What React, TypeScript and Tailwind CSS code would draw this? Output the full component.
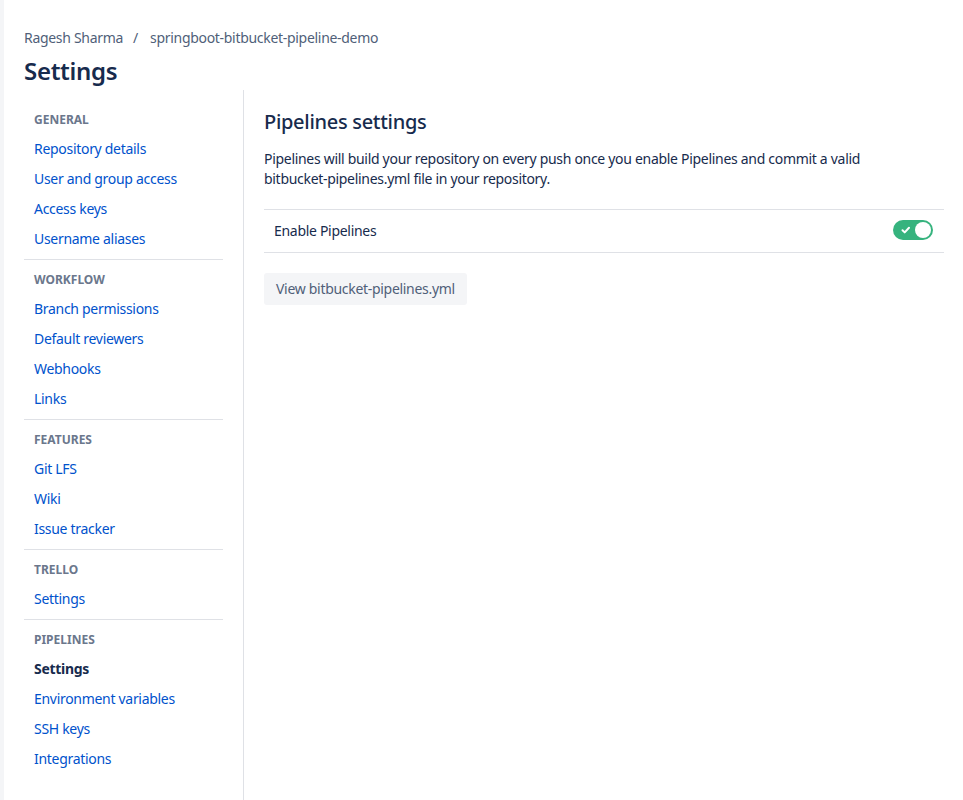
const groups: { title: string; items: string[]; active?: string }[] = [
  { title: 'General', items: ['Repository details', 'User and group access', 'Access keys', 'Username aliases'] },
  { title: 'Workflow', items: ['Branch permissions', 'Default reviewers', 'Webhooks', 'Links'] },
  { title: 'Features', items: ['Git LFS', 'Wiki', 'Issue tracker'] },
  { title: 'Trello', items: ['Settings'] },
  { title: 'Pipelines', items: ['Settings', 'Environment variables', 'SSH keys', 'Integrations'], active: 'Settings' },
];

function Toggle() {
  return (
    <div className="flex h-[20px] w-[40px] items-center justify-between rounded-full bg-[#36b37e] px-[2px]">
      <svg width="16" height="16" viewBox="0 0 16 16" className="ml-[3px]">
        <path d="M4.5 8.2l2.2 2.2 4.3-4.6" fill="none" stroke="#fff" strokeWidth="2" strokeLinecap="round" strokeLinejoin="round" />
      </svg>
      <div className="h-[16px] w-[16px] rounded-full bg-white" />
    </div>
  );
}

export default function App() {
  return (
    <div className="min-h-[800px] bg-[#f4f5f7] pl-[4px] font-['Noto_Sans',sans-serif] text-[14px] tracking-[-0.3px] text-[#172b4d]">
      <div className="min-h-[800px] bg-white pl-[20px] pr-[19px]">
        <header className="pt-[27px]">
          <nav className="flex h-[20px] items-center text-[14px] text-[#505f79]">
            <span>Ragesh Sharma</span>
            <span className="ml-[10px] mr-[12px]">/</span>
            <span>springboot-bitbucket-pipeline-demo</span>
          </nav>
          <h1 className="mt-[9px] h-[30px] text-[24px] leading-[30px] font-semibold">Settings</h1>
        </header>

        <div className="mt-[4px] flex min-h-[710px]">
          <aside className="w-[220px] shrink-0 border-r border-[#dfe1e6] pr-[20px] pt-[13px]">
            {groups.map((g, gi) => (
              <div key={g.title}>
                {gi > 0 && <div className="mb-[3px] mt-[6px] h-px bg-[#dfe1e6]" />}
                <div className="flex h-[30px] items-center px-[10px] pt-[4px] text-[12px] font-bold uppercase tracking-normal text-[#6b778c]">
                  {g.title}
                </div>
                <ul>
                  {g.items.map((item) => (
                    <li key={item} className="flex h-[30px] items-center px-[10px]">
                      {g.active === item ? (
                        <span className="font-bold text-[#172b4d]">{item}</span>
                      ) : (
                        <a href="#" className="text-[#0052cc]">{item}</a>
                      )}
                    </li>
                  ))}
                </ul>
              </div>
            ))}
          </aside>

          <main className="flex-1 pl-[20px] pt-[18px]">
            <h2 className="h-[28px] text-[20px] leading-[28px] font-medium">Pipelines settings</h2>
            <p className="mt-[13px] leading-[20px]">
              Pipelines will build your repository on every push once you enable Pipelines and commit a valid
              <br />
              bitbucket-pipelines.yml file in your repository.
            </p>
            <div className="mt-[20px] flex h-[44px] items-center justify-between border-y border-[#dfe1e6] pb-[2px] pl-[10px] pr-[11px]">
              <span>Enable Pipelines</span>
              <Toggle />
            </div>
            <button className="mt-[20px] h-[32px] rounded-[3px] bg-[#f4f5f7] px-[12px] pb-[2px] text-[#505f79]">
              View bitbucket-pipelines.yml
            </button>
          </main>
        </div>
      </div>
    </div>
  );
}
